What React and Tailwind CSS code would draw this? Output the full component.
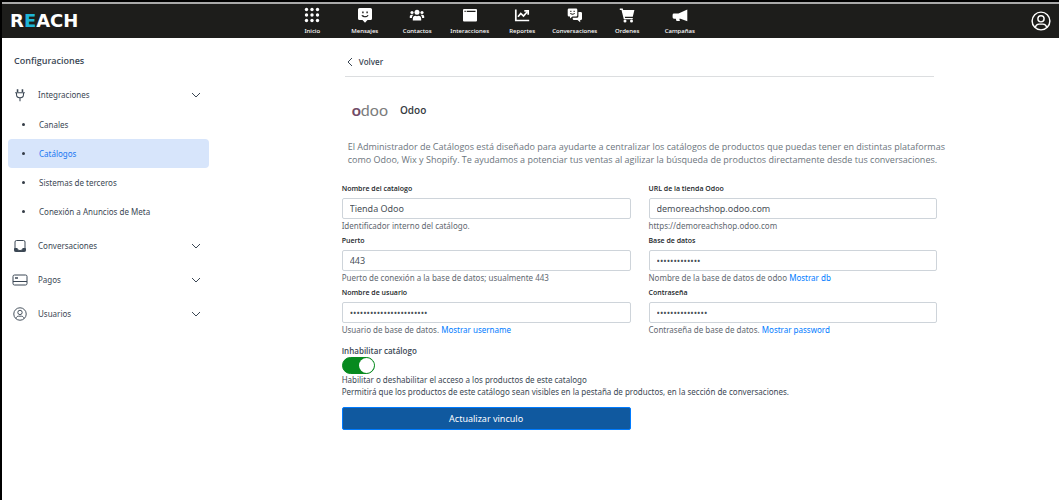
import { useState } from 'react';

const GridIcon = () => (
    <svg viewBox="0 0 16 16" className="h-4 w-4" fill="currentColor">
        {[2.5, 8, 13.5].map((y) => [2.5, 8, 13.5].map((x) => <circle key={`${x}-${y}`} cx={x} cy={y} r="1.7" />))}
    </svg>
);

const MessageIcon = () => (
    <svg viewBox="0 0 16 16" className="h-4 w-4" fill="currentColor">
        <path fillRule="evenodd" d="M2.500 1h11A1.500 1.500 0 0 1 15 2.500v9a1.500 1.500 0 0 1-1.500 1.500h-3L8 15.800 5.500 13h-3A1.500 1.500 0 0 1 1 11.500v-9A1.500 1.500 0 0 1 2.500 1ZM5.200 4.500v1.800h1.400V4.500ZM9.400 4.500v1.800h1.400V4.500ZM4.500 8.200c.8 2.800 6.200 2.800 7 0l-1-.2c-.8 1.600-4.200 1.600-5 0Z" />
    </svg>
);

const ContactsIcon = () => (
    <svg viewBox="0 0 16 16" className="h-4 w-4" fill="currentColor">
        <circle cx="8" cy="5.200" r="2.500" />
        <circle cx="3" cy="5.500" r="1.600" />
        <circle cx="13" cy="5.500" r="1.600" />
        <path d="M3.800 13.500v-1.600c0-2 1.200-3.200 2.600-3.200 1 .6 2.200.6 3.200 0 1.400 0 2.600 1.200 2.600 3.200v1.600ZM.8 11V9.500c0-1 .8-1.700 1.700-1.700h1.800c-.9.8-1.300 1.900-1.400 3.200ZM15.200 11V9.500c0-1-.8-1.700-1.700-1.700h-1.800c.9.8 1.300 1.900 1.400 3.200Z" />
    </svg>
);

const WindowIcon = () => (
    <svg viewBox="0 0 16 16" className="h-4 w-4" fill="currentColor">
        <path fillRule="evenodd" d="M2 2h12a1 1 0 0 1 1 1v10.500a1 1 0 0 1-1 1H2a1 1 0 0 1-1-1V3a1 1 0 0 1 1-1ZM2.500 3.800v1.300h1.200V3.800ZM4.700 3.800v1.300h8.800V3.800Z" />
    </svg>
);

const ReportIcon = () => (
    <svg viewBox="0 0 16 16" className="h-4 w-4" fill="none" stroke="currentColor" strokeWidth="1.700">
        <path d="M1.800 2.500v11h13.400M4 9.800 6.800 6.500 9.500 9l4-4.500" />
        <path d="M10.300 3.800h3.900v3.900" />
    </svg>
);

const ChatsIcon = () => (
    <svg viewBox="0 0 16 16" className="h-4 w-4" fill="currentColor">
        <path fillRule="evenodd" d="M2 1.500h7A1.300 1.300 0 0 1 10.300 2.800v5.400A1.300 1.300 0 0 1 9 9.500H5.500L3 11.500v-2H2A1.300 1.300 0 0 1 .7 8.200V2.800A1.300 1.300 0 0 1 2 1.500ZM3.300 3.800V5h1.100V3.800ZM6.600 3.800V5h1.100V3.800ZM3 6.200c.5 1.900 4.500 1.900 5 0l-.8-.2c-.5 1-2.900 1-3.400 0Z" />
        <path d="M11.400 5h2.300A1.300 1.300 0 0 1 15 6.300v5.400a1.300 1.300 0 0 1-1.300 1.300h-.5v2.200L10.500 13H7a1.300 1.300 0 0 1-1.300-1.300v-1h4.200a1.500 1.500 0 0 0 1.500-1.500Z" />
    </svg>
);

const CartIcon = () => (
    <svg viewBox="0 0 16 16" className="h-4 w-4" fill="currentColor">
        <path d="M.8 1.500h2.900l.5 1.600h11.200l-1.600 6.700H5.800l.3 1.200h7.700v1.300H4.800L2.500 3H.8Z" />
        <circle cx="6" cy="14" r="1.500" />
        <circle cx="12.500" cy="14" r="1.500" />
    </svg>
);

const MegaphoneIcon = () => (
    <svg viewBox="0 0 16 16" className="h-4 w-4" fill="currentColor">
        <path d="M15.300 2.500v11.700L8.500 11.700H7.300l.6 2.300H4.500l-.7-2.300H2a1.400 1.400 0 0 1-1.400-1.400V7.900A1.400 1.400 0 0 1 2 6.500h4.500Z" />
    </svg>
);

const UserIcon = ({ className, strokeWidth }) => (
    <svg viewBox="0 0 18 18" className={className} fill="none" stroke="currentColor" strokeWidth={strokeWidth}>
        <circle cx="9" cy="9" r="8" />
        <circle cx="9" cy="7" r="2.800" />
        <path d="M3.800 14.800c.5-2 1.800-3 3.400-3h3.600c1.600 0 2.900 1 3.400 3" />
    </svg>
);

const PlugIcon = () => (
    <svg viewBox="0 0 16 16" className="h-3.5 w-3.5" fill="none" stroke="currentColor" strokeWidth="1.200">
        <path d="M5.200 1.500v3M10.800 1.500v3" strokeWidth="1.800" />
        <path d="M2.500 5.500h11M4 5.500v2c0 2.200 1.500 3.800 4 3.800s4-1.600 4-3.800v-2M8 11.300V15" />
    </svg>
);

const InboxIcon = () => (
    <svg viewBox="0 0 14 14" className="h-3.5 w-3.5" fill="none" stroke="currentColor" strokeWidth="1">
        <path d="M2 9.500V3A1.500 1.500 0 0 1 3.500 1.500h7A1.500 1.500 0 0 1 12 3v6.500" />
        <path fill="currentColor" d="M1.500 9.500h2.700c.4 1.400 1.400 2 2.800 2s2.400-.6 2.800-2h2.700v2.200a.8.8 0 0 1-.8.8H2.300a.8.8 0 0 1-.8-.8Z" />
    </svg>
);

const CardIcon = () => (
    <svg viewBox="0 0 15 12" className="h-3 w-4" fill="none" stroke="currentColor" strokeWidth="1">
        <rect x=".5" y="1" width="14" height="10" rx="1.500" />
        <path d="M.5 7.500h14" />
        <path d="M2.500 4h3" strokeWidth="1.500" />
    </svg>
);

const Chevron = ({ className }) => (
    <svg viewBox="0 0 10 6" className={className} fill="none" stroke="currentColor" strokeWidth="1">
        <path d="m1 1 4 4 4-4" />
    </svg>
);

const navItems = [
    { name: 'Inicio', icon: GridIcon },
    { name: 'Mensajes', icon: MessageIcon },
    { name: 'Contactos', icon: ContactsIcon },
    { name: 'Interacciones', icon: WindowIcon },
    { name: 'Reportes', icon: ReportIcon },
    { name: 'Conversaciones', icon: ChatsIcon },
    { name: 'Ordenes', icon: CartIcon },
    { name: 'Campañas', icon: MegaphoneIcon },
];

const catalogLinks = ['Canales', 'Catálogos', 'Sistemas de terceros', 'Conexión a Anuncios de Meta'];

const fields = [
    { id: 'name', label: 'Nombre del catalogo', value: 'Tienda Odoo', help: 'Identificador interno del catálogo.' },
    { id: 'url', label: 'URL de la tienda Odoo', value: 'demoreachshop.odoo.com', help: 'https://demoreachshop.odoo.com' },
    { id: 'port', label: 'Puerto', value: '443', help: 'Puerto de conexión a la base de datos; usualmente 443' },
    { id: 'db', label: 'Base de datos', value: 'demoreachshop', help: 'Nombre de la base de datos de odoo', toggle: 'Mostrar db' },
    { id: 'username', label: 'Nombre de usuario', value: 'admin@demoreachshop.com', help: 'Usuario de base de datos.', toggle: 'Mostrar username' },
    { id: 'password', label: 'Contraseña', value: 'odoo-reach-2023', help: 'Contraseña de base de datos.', toggle: 'Mostrar password' },
];

const Header = () => (
    <header className="flex h-9 items-center border-t-2 border-[#a9a9a9] bg-[#1d1d1b] px-2 text-white">
        <a href="#" className="w-20 font-['DejaVu_Sans',sans-serif] text-lg font-bold">
            R<span className="text-[#1fb5d6]">E</span>ACH
        </a>
        <nav className="ml-[196px] flex w-[420px]">
            {navItems.map((item) => (
                <a key={item.name} href="#" className="flex w-0 flex-1 flex-col items-center gap-1 font-['Noto_Sans',sans-serif] text-[6px] leading-[8px] font-medium whitespace-nowrap">
                    <item.icon />
                    {item.name}
                </a>
            ))}
        </nav>
        <button type="button" aria-label="Cuenta" className="ml-auto">
            <UserIcon className="h-5 w-5" strokeWidth="1.300" />
        </button>
    </header>
);

const SidebarGroup = ({ name, icon }) => (
    <button type="button" className="flex h-[34px] w-full items-center pr-2 text-left">
        <span className="flex w-[30px] pl-1">
            <span className="flex w-4 justify-center">{icon}</span>
        </span>
        {name}
        <Chevron className="ml-auto h-1.5 w-2.5" />
    </button>
);

const Sidebar = () => (
    <aside className="w-[201px] shrink-0 font-['Noto_Sans',sans-serif] text-[8px] text-[#3b4754]">
        <h2 className="mt-[17px] pl-1.5 font-['Open_Sans',sans-serif] text-[9px] leading-3 font-semibold">Configuraciones</h2>
        <div className="mt-[11px]">
            <SidebarGroup name="Integraciones" icon={<PlugIcon />} />
        </div>
        <ul className="-mt-0.5">
            {catalogLinks.map((link) => (
                <li key={link}>
                    <a
                        href="#"
                        className={`flex h-[29px] items-center rounded pl-3.5 ${link === 'Catálogos' ? 'bg-[#d7e5fb] text-[#1877f2]' : ''}`}
                    >
                        <span className="mr-3.5 h-[3px] w-[3px] rounded-full bg-[#343c46]" />
                        {link}
                    </a>
                </li>
            ))}
        </ul>
        <div className="mt-[3px]">
            <SidebarGroup name="Conversaciones" icon={<InboxIcon />} />
            <SidebarGroup name="Pagos" icon={<CardIcon />} />
            <SidebarGroup name="Usuarios" icon={<UserIcon className="h-3.5 w-3.5" strokeWidth="1.200" />} />
        </div>
    </aside>
);

const Field = ({ field }) => {
    const [visible, setVisible] = useState(false);
    const secret = Boolean(field.toggle) && !visible;

    return (
        <div>
            <label htmlFor={field.id} className="block text-[7px] leading-[10px] font-semibold text-[#212529]">
                {field.label}
            </label>
            <input
                id={field.id}
                type={secret ? 'password' : 'text'}
                defaultValue={field.value}
                className="mt-1 block h-[21px] w-full rounded-xs border border-[#ced4da] bg-white px-[7px] font-['Noto_Sans',sans-serif] text-[9px] text-[#495057]"
            />
            <p className="mt-px font-['Noto_Sans',sans-serif] text-[8px] leading-3 text-[#5f6870]">
                {field.help}{' '}
                {field.toggle && (
                    <button type="button" className="text-[#007bff]" onClick={() => setVisible(!visible)}>
                        {field.toggle}
                    </button>
                )}
            </p>
        </div>
    );
};

const CatalogForm = () => (
    <form className="pb-6" onSubmit={(e) => e.preventDefault()}>
        <div className="grid grid-cols-2 gap-x-[18px] gap-y-1">
            {fields.map((field) => <Field key={field.id} field={field} />)}
        </div>
        <div className="mt-[9px] font-['Noto_Sans',sans-serif] text-[8px] leading-3 text-[#3b4754]">
            <label htmlFor="enabled" className="block font-['Open_Sans',sans-serif] font-semibold">Inhabilitar catálogo</label>
            <input
                id="enabled"
                type="checkbox"
                role="switch"
                defaultChecked
                className="block h-[17px] w-[33px] appearance-none rounded-full border border-[#078a1f] bg-[#078a1f] before:block before:h-[15px] before:w-[15px] before:rounded-full before:bg-white checked:before:ml-4"
            />
            <p>Habilitar o deshabilitar el acceso a los productos de este catalogo</p>
            <p>Permitirá que los productos de este catálogo sean visibles en la pestaña de productos, en la sección de conversaciones.</p>
        </div>
        <div className="mt-[9px] grid grid-cols-2 gap-x-[18px]">
            <button type="submit" className="h-[23px] rounded-xs border border-[#007bff] bg-[#10599f] font-['Noto_Sans',sans-serif] text-[9px] text-white">
                Actualizar vinculo
            </button>
        </div>
    </form>
);

const App = () => (
    <div className="min-h-screen border-t-2 border-l-2 border-black bg-white font-['Open_Sans','Noto_Sans',sans-serif]">
        <Header />
        <div className="flex pl-1.5">
            <Sidebar />
            <main className="min-w-0 flex-1 pl-[11px]">
                <div className="mx-auto w-[71%]">
                    <div className="mx-[3px] border-b border-[#dcdee0] pt-[17px] pb-[7px]">
                        <a href="#" className="flex items-center gap-1 text-[8px] leading-[14px] font-semibold text-[#3b4754]">
                            <Chevron className="h-1.5 w-2.5 rotate-90" />
                            Volver
                        </a>
                    </div>
                    <div className="mt-6 flex items-center gap-3 pl-2.5">
                        <span className="font-[Lato,sans-serif] text-base leading-[18px] text-[#7c7c7c]">
                            <span className="font-bold text-[#714b67]">o</span>doo
                        </span>
                        <h1 className="text-[10px] leading-[14px] font-semibold text-[#343a40]">Odoo</h1>
                    </div>
                    <p className="mt-[21px] -mr-4 mb-[18px] pl-1.5 text-[9px] leading-[13px] text-[#6c757d]">
                        El Administrador de Catálogos está diseñado para ayudarte a centralizar los catálogos de productos que puedas tener en distintas plataformas como Odoo, Wix y Shopify. Te ayudamos a potenciar tus ventas al agilizar la búsqueda de productos directamente desde tus conversaciones.
                    </p>
                    <CatalogForm />
                </div>
            </main>
        </div>
    </div>
);

export default App;
